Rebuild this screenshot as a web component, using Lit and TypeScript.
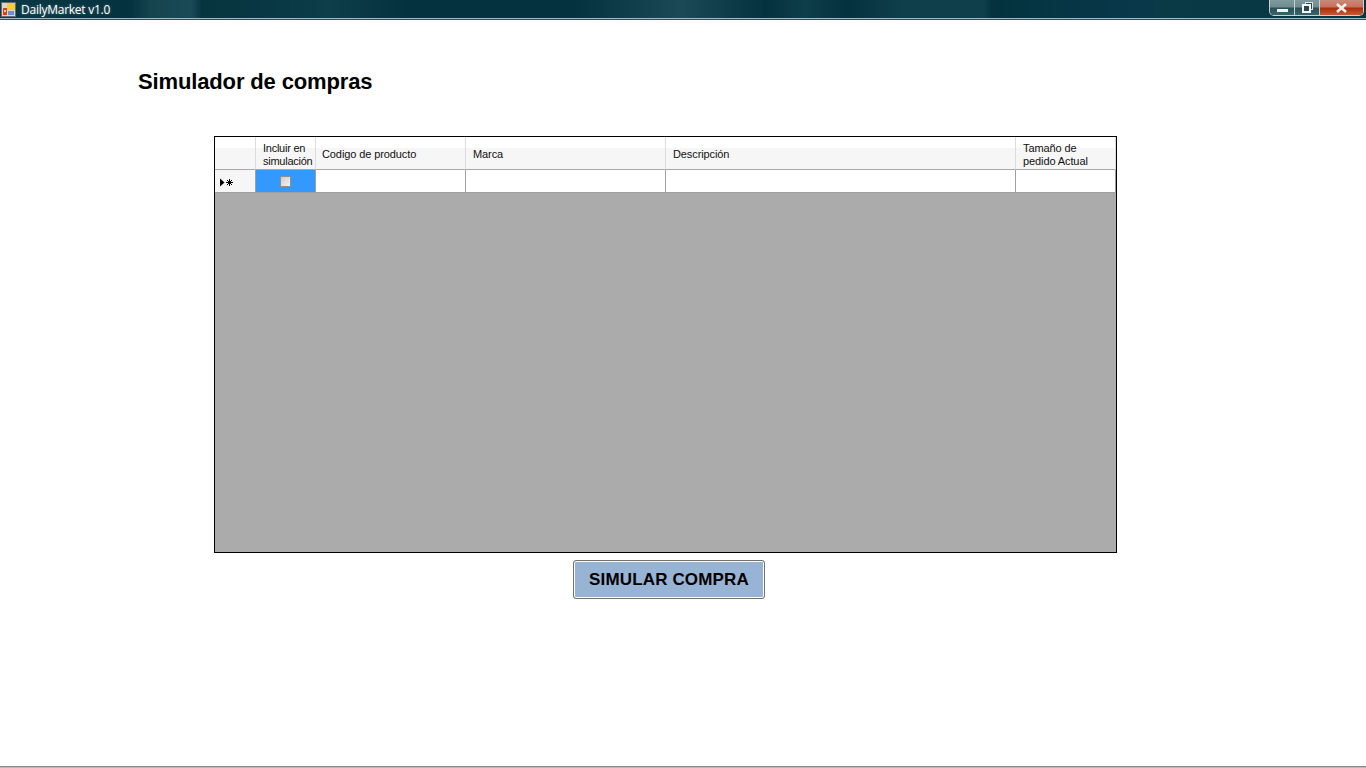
import { LitElement, css, html } from 'lit';
import { customElement } from 'lit/decorators.js';

const columns = [
  { label: ['Incluir en', 'simulación'], cls: 'tight' },
  { label: ['Codigo de producto'], cls: '' },
  { label: ['Marca'], cls: 'wide' },
  { label: ['Descripción'], cls: 'wide' },
  { label: ['Tamaño de', 'pedido Actual'], cls: 'wide' },
];

@customElement('app-root')
export class AppRoot extends LitElement {
  render() {
    return html`
      <div class="window">
        <header class="titlebar">
          <svg class="app-icon" width="15" height="15" viewBox="0 0 15 15">
            <rect x="0.5" y="0.5" width="14" height="14" fill="#d8d8d0" stroke="#6a6a6a" />
            <rect x="6" y="1" width="8" height="7" fill="#f4cc3c" />
            <rect x="2" y="6" width="4" height="7" fill="#e03a20" />
            <rect x="7" y="9" width="6" height="4" fill="#6a90d8" />
            <rect x="3" y="8" width="2" height="2" fill="#f0d060" />
          </svg>
          <span class="app-title">DailyMarket v1.0</span>
          <div class="controls">
            <div class="ctl min"><span class="min-glyph"></span></div>
            <div class="ctl max">
              <svg width="11" height="11" viewBox="0 0 11 11">
                <rect x="3.5" y="0.5" width="7" height="7" fill="#29484d" stroke="#dfe6e6" />
                <rect x="1" y="3" width="7" height="7" fill="#29484d" stroke="#f4f6f6" stroke-width="2" />
              </svg>
            </div>
            <div class="ctl close">
              <svg width="13" height="10" viewBox="0 0 13 10">
                <path d="M2 1 L11 9 M11 1 L2 9" stroke="#f6f0ec" stroke-width="2.6" fill="none" />
              </svg>
            </div>
          </div>
        </header>

        <main class="content">
          <h1 class="heading">Simulador de compras</h1>

          <div class="grid">
            <div class="head-row">
              <div class="head-cell"></div>
              ${columns.map(
                (c) => html`<div class="head-cell ${c.cls}">${c.label.map((l) => html`<span>${l}</span>`)}</div>`
              )}
            </div>
            <div class="data-row">
              <div class="row-head">
                <svg width="14" height="9" viewBox="0 0 14 9">
                  <path d="M0 0.5 L0 8.5 L4.5 4.5 Z" fill="#000" />
                  <path d="M6 4.5 H13 M9.5 1 V8 M7 2 L12 7 M12 2 L7 7" stroke="#000" stroke-width="1" fill="none" />
                </svg>
              </div>
              <div class="cell selected"><span class="checkbox"></span></div>
              <div class="cell"></div>
              <div class="cell"></div>
              <div class="cell"></div>
              <div class="cell"></div>
            </div>
          </div>

          <button class="simulate">SIMULAR COMPRA</button>
        </main>
        <div class="bottom-line"></div>
      </div>
    `;
  }

  static styles = css`
    :host {
      display: block;
      font-family: 'Liberation Sans', Arial, sans-serif;
    }

    .window {
      width: 1366px;
      height: 768px;
      display: flex;
      flex-direction: column;
      background: #fff;
      overflow: hidden;
    }

    .titlebar {
      height: 18px;
      flex: none;
      display: flex;
      align-items: center;
      padding-left: 1px;
      border-bottom: 1px solid #9dbcc0;
      background: linear-gradient(
        90deg,
        #0a3a45 0%,
        #04323e 9.5%,
        #15444f 11%,
        #1a4a55 14%,
        #06343f 14.8%,
        #0a3a46 22%,
        #0e3e4a 24%,
        #04323e 30%,
        #04323e 42%,
        #1b4a56 50%,
        #04323e 56%,
        #0e3e4a 59%,
        #04323e 62%,
        #0f3f4b 66%,
        #0f3f4b 72%,
        #04333f 72.6%,
        #08384a 83.5%,
        #0a3a46 85%,
        #063642 100%
      );
      box-shadow: 0 1px 0 #24525a;
      color: #fff;
    }

    .app-icon {
      flex: none;
    }

    .app-title {
      margin-left: 5px;
      font-family: 'Open Sans', sans-serif;
      font-size: 12px;
      letter-spacing: -0.25px;
      text-shadow: 0 0 3px rgba(255, 255, 255, 0.35);
    }

    .controls {
      margin-left: auto;
      margin-right: 2px;
      display: flex;
      height: 15px;
      align-self: flex-start;
      border: 1px solid #c4d2d2;
      border-top: none;
      border-radius: 0 0 5px 5px;
      overflow: hidden;
    }

    .ctl {
      display: flex;
      align-items: center;
      justify-content: center;
    }

    .min,
    .max {
      width: 24px;
      background: linear-gradient(180deg, #7f9a9c 0%, #6f8c8f 45%, #27525a 55%, #3a6468 100%);
      border-right: 1px solid #c5d2d2;
    }

    .min-glyph {
      width: 11px;
      height: 3px;
      margin-top: 6px;
      background: #f2f2f2;
    }

    .close {
      width: 43px;
      background: linear-gradient(180deg, #c98a78 0%, #c8705f 45%, #b02c0c 55%, #c85a34 100%);
    }

    .content {
      flex: 1;
      display: flex;
      flex-direction: column;
      align-items: flex-start;
      padding: 50px 0 0 138px;
    }

    .heading {
      margin: 0;
      font-size: 22px;
      font-weight: 700;
      line-height: 26px;
      letter-spacing: -0.14px;
      color: #000;
    }

    .grid {
      margin: 41px 0 0 76px;
      width: 901px;
      height: 415px;
      border: 1px solid #000;
      background: #ababab;
      font-size: 11px;
      color: #111;
    }

    .head-row,
    .data-row {
      display: grid;
      grid-template-columns: 41px 60px 150px 200px 350px 100px;
    }

    .head-row {
      height: 33px;
      background: linear-gradient(180deg, #fff 0 33%, #f6f6f6 33% 100%);
    }

    .head-cell {
      display: flex;
      flex-direction: column;
      justify-content: center;
      padding: 3px 0 0 6px;
      box-sizing: border-box;
      border-right: 1px solid #dcdcdc;
      border-bottom: 1px solid #a8a8a8;
      line-height: 13px;
      letter-spacing: -0.1px;
      white-space: nowrap;
    }

    .head-cell.tight {
      padding-left: 7px;
      letter-spacing: -0.25px;
    }

    .head-cell.wide {
      padding-left: 7px;
    }

    .data-row {
      height: 23px;
    }

    .row-head {
      display: flex;
      align-items: center;
      padding: 2px 0 0 5px;
      box-sizing: border-box;
      background: #f6f6f6;
      border-right: 1px solid #a0a0a0;
      border-bottom: 1px solid #a0a0a0;
    }

    .cell {
      display: flex;
      align-items: center;
      justify-content: center;
      box-sizing: border-box;
      background: #fff;
      border-right: 1px solid #a0a0a0;
      border-bottom: 1px solid #a0a0a0;
    }

    .cell.selected {
      background: #3399ff;
    }

    .checkbox {
      width: 11px;
      height: 11px;
      box-sizing: border-box;
      background: linear-gradient(135deg, #cfcfcf, #f2f2f2);
      border: 1px solid #8e8f8f;
    }

    .simulate {
      all: unset;
      box-sizing: border-box;
      margin: 7px 0 0 435px;
      width: 192px;
      height: 39px;
      display: flex;
      align-items: center;
      justify-content: center;
      background: #98b4d4;
      border: 1px solid #707070;
      border-radius: 3px;
      box-shadow: inset 0 0 0 1px #fff;
      font-size: 17px;
      font-weight: 700;
      letter-spacing: 0.15px;
      color: #000;
    }

    .bottom-line {
      height: 2px;
      flex: none;
      background: linear-gradient(180deg, #707070, #d0d0d0);
    }
  `;
}

declare global {
  interface HTMLElementTagNameMap {
    'app-root': AppRoot;
  }
}
